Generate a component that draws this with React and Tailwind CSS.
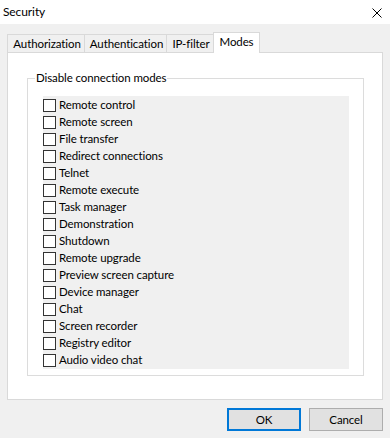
import React from "react";

const modes = [
  "Remote control",
  "Remote screen",
  "File transfer",
  "Redirect connections",
  "Telnet",
  "Remote execute",
  "Task manager",
  "Demonstration",
  "Shutdown",
  "Remote upgrade",
  "Preview screen capture",
  "Device manager",
  "Chat",
  "Screen recorder",
  "Registry editor",
  "Audio video chat",
];

const tabs = [
  { label: "Authorization", w: "w-[78px]" },
  { label: "Authentication", w: "w-[83px]" },
  { label: "IP-filter", w: "w-[48px]" },
];

const App = () => {
  return (
    <div className="w-[390px] h-[438px] bg-[#f0f0f0] flex flex-col text-[11.5px] tracking-[-0.1px] text-black font-['Lato',sans-serif] leading-none">
      {/* title bar */}
      <div className="h-[24px] bg-white flex items-center justify-between pl-[3px] pr-[8px]">
        <span className="text-[12px]">Security</span>
        <svg width="10" height="10" viewBox="0 0 10 10" className="mt-[1px]">
          <path d="M0.5 0.5 L9.5 9.5 M9.5 0.5 L0.5 9.5" stroke="#000" strokeWidth="1" />
        </svg>
      </div>

      <div className="px-[7px] pt-[8px] flex flex-col">
        {/* tabs */}
        <div className="h-[20px] flex items-end">
          {tabs.map((t, i) => (
            <div
              key={t.label}
              className={`${t.w} h-[18px] shrink-0 ${i > 0 ? "-ml-px" : ""} border border-b-0 border-[#d9d9d9] bg-[#f0f0f0] flex items-center justify-center whitespace-nowrap pl-[2px]`}
            >
              {t.label}
            </div>
          ))}
          <div className="relative z-10 w-[47px] h-[21px] shrink-0 -ml-px -mb-px border border-b-0 border-[#d9d9d9] bg-white flex items-center justify-center pb-[2px]">
            Modes
          </div>
        </div>

        {/* panel */}
        <div className="h-[348px] bg-white border border-[#d9d9d9] pl-[19px] pr-[18px] pt-[25px]">
          <div className="relative h-[298px] border border-[#dcdcdc] pl-[15px] pr-[14px] pt-[17px]">
            <span className="absolute left-[7px] -top-[7px] bg-white px-[1px]">Disable connection modes</span>
            <div className="bg-[#f0f0f0] h-[273px] flex flex-col pt-[1px]">
              {modes.map((m) => (
                <div key={m} className="h-[17px] flex items-center">
                  <span className="w-[13px] h-[13px] border border-[#333333] bg-white shrink-0" />
                  <span className="ml-[3px] pb-[1px]">{m}</span>
                </div>
              ))}
            </div>
          </div>
        </div>

        {/* buttons */}
        <div className="mt-[8px] flex justify-end gap-[8px]">
          <button className="w-[74px] h-[23px] bg-[#e1e1e1] border-2 border-[#0078d7] flex items-center justify-center">
            OK
          </button>
          <button className="w-[74px] h-[23px] bg-[#e1e1e1] border border-[#adadad] flex items-center justify-center">
            Cancel
          </button>
        </div>
      </div>
    </div>
  );
};

export default App;
